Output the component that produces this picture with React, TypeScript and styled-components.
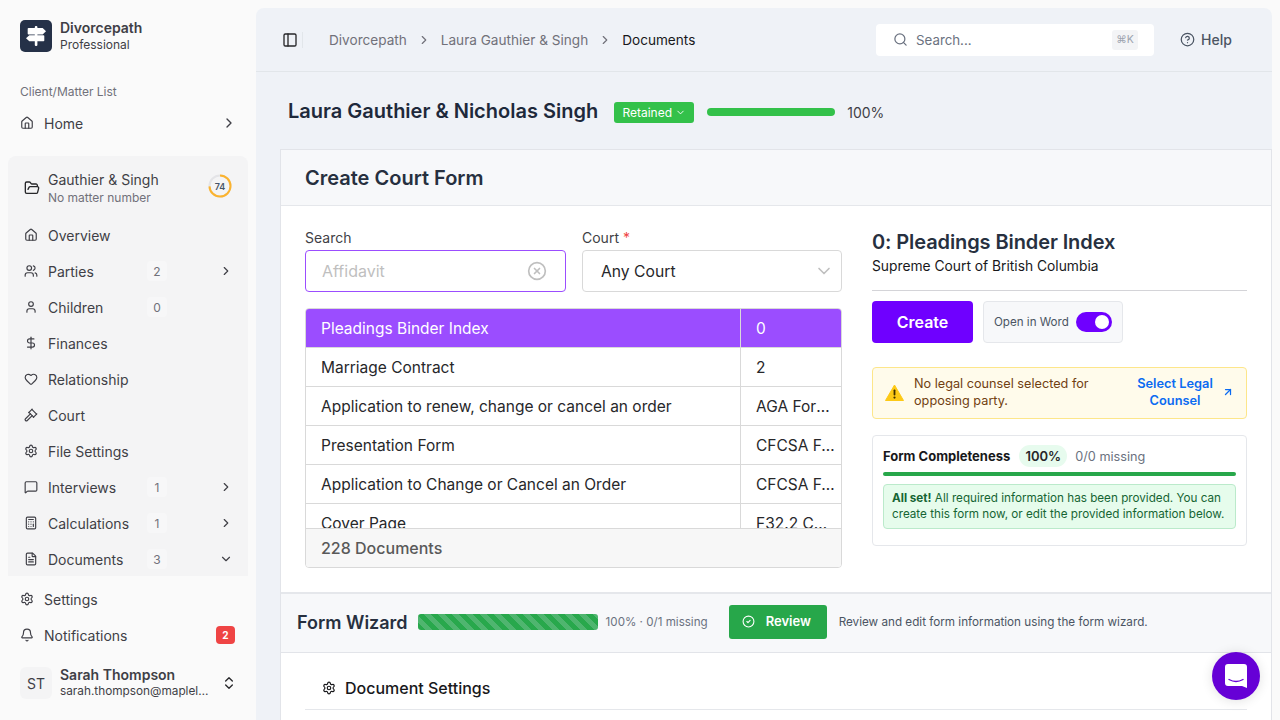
import React from "react";
import styled, { createGlobalStyle } from "styled-components";
import {
  ArrowUpRight,
  Bell,
  Calculator,
  ChevronDown,
  ChevronRight,
  ChevronsUpDown,
  CircleCheck,
  CircleHelp,
  CircleX,
  DollarSign,
  FileText,
  FolderOpen,
  Gavel,
  Heart,
  House,
  MessageSquare,
  PanelLeft,
  Search,
  Settings,
  User,
  Users,
} from "lucide-react";

const GlobalStyle = createGlobalStyle`
  html, body {
    margin: 0;
    height: 720px;
    overflow: hidden;
    background: #fafafa;
    font-family: Inter, "Liberation Sans", sans-serif;
    color: #27272a;
  }
  * { box-sizing: border-box; }
`;

const Shell = styled.div`
  display: flex;
  width: 1280px;
  height: 720px;
  overflow: hidden;
  position: relative;
`;

const Sidebar = styled.aside`
  width: 256px;
  flex: none;
  display: flex;
  flex-direction: column;
  padding: 20px 8px 0;
`;

const Brand = styled.div`
  display: flex;
  align-items: center;
  gap: 8px;
  padding: 0 12px;
  height: 32px;
`;

const LogoBox = styled.div`
  width: 32px;
  height: 32px;
  border-radius: 5px;
  background: #253148;
  display: flex;
  align-items: center;
  justify-content: center;
`;

const Stack = styled.div`
  display: flex;
  flex-direction: column;
  min-width: 0;
`;

const BrandName = styled.span`
  font-size: 14px;
  line-height: 17px;
  font-weight: 600;
  color: #3f3f46;
`;

const BrandSub = styled.span`
  font-size: 12px;
  line-height: 17px;
  color: #3f3f46;
`;

const SideLabel = styled.div`
  font-size: 12px;
  line-height: 16px;
  color: #71717a;
  padding: 0 12px;
  margin-top: 32px;
`;

const NavRow = styled.div`
  height: 36px;
  display: flex;
  align-items: center;
  gap: 10px;
  padding: 0 12px;
  font-size: 14px;
  color: #3f3f46;
  svg { flex: none; }
`;

const NavText = styled.span`
  flex: none;
`;

const Count = styled.span`
  position: absolute;
  left: 139px;
  top: 8px;
  width: 20px;
  height: 20px;
  border-radius: 4px;
  background: #f7f7f8;
  display: flex;
  align-items: center;
  justify-content: center;
  font-size: 12px;
  color: #71717a;
`;

const RowEnd = styled.span`
  margin-left: auto;
  margin-right: -1px;
  display: flex;
`;

const HomeRow = styled(NavRow)`
  margin-top: 5px;
`;

const MatterGroup = styled.div`
  margin-top: 15px;
  height: 420px;
  background: #f4f4f5;
  border-radius: 8px 8px 0 0;
  padding-top: 16px;
  margin-bottom: 5px;
`;

const MatterHead = styled.div`
  display: flex;
  align-items: center;
  gap: 8px;
  height: 32px;
  padding: 0 16px;
  margin-bottom: 13px;
`;

const MatterName = styled.span`
  font-size: 14px;
  line-height: 18px;
  color: #3f3f46;
`;

const MatterSub = styled.span`
  font-size: 12px;
  line-height: 17px;
  color: #71717a;
`;

const GroupRow = styled(NavRow)`
  position: relative;
  padding: 0 16px;
`;

const Ring = styled.div`
  margin-left: auto;
  margin-bottom: 4px;
  position: relative;
  width: 24px;
  height: 24px;
`;

const RingValue = styled.span`
  position: absolute;
  inset: 0;
  display: flex;
  align-items: center;
  justify-content: center;
  font-size: 9px;
  font-weight: 600;
  color: #475569;
`;

const AlertCount = styled.span`
  margin-left: auto;
  margin-right: 1px;
  width: 19px;
  height: 18px;
  border-radius: 4px;
  background: #ef4444;
  color: #fff;
  font-size: 10px;
  font-weight: 700;
  display: flex;
  align-items: center;
  justify-content: center;
`;

const UserRow = styled.div`
  display: flex;
  align-items: center;
  gap: 8px;
  padding: 0 12px;
  height: 32px;
  margin-top: 14px;
`;

const Avatar = styled.div`
  width: 32px;
  height: 32px;
  flex: none;
  border-radius: 6px;
  background: #f4f4f5;
  font-size: 14px;
  color: #3f3f46;
  display: flex;
  align-items: center;
  justify-content: center;
`;

const UserName = styled.span`
  font-size: 14px;
  line-height: 17px;
  font-weight: 600;
  color: #3f3f46;
`;

const UserMail = styled.span`
  font-size: 11.8px;
  line-height: 17px;
  color: #3f3f46;
  width: 153px;
  white-space: nowrap;
  overflow: hidden;
  text-overflow: ellipsis;
`;

const Main = styled.main`
  width: 1016px;
  margin-top: 8px;
  height: 712px;
  background: #eff2f7;
  border-radius: 8px 8px 0 0;
  display: flex;
  flex-direction: column;
  overflow: hidden;
`;

const TopBar = styled.header`
  height: 64px;
  flex: none;
  display: flex;
  align-items: center;
  padding: 0 0 0 26px;
  border-bottom: 1px solid #e2e6ea;
`;

const Separator = styled.span`
  width: 1px;
  height: 16px;
  background: #e2e6ea;
  margin: 0 26px 0 4px;
`;

const Crumb = styled.span<{ $current?: boolean }>`
  font-size: 13.6px;
  color: ${(p) => (p.$current ? "#18181b" : "#71717a")};
`;

const CrumbArrow = styled.span`
  display: flex;
  margin: 0 10px;
  color: #71717a;
`;

const SearchBox = styled.div`
  margin-left: auto;
  width: 278px;
  height: 32px;
  border-radius: 4px;
  background: #fff;
  display: flex;
  align-items: center;
  gap: 8px;
  padding: 0 16px 0 17px;
  font-size: 13.3px;
  color: #6b7280;
`;

const Kbd = styled.span`
  margin-left: auto;
  width: 26px;
  height: 20px;
  border-radius: 3px;
  background: #f3f4f6;
  color: #9ca3af;
  font-size: 10.5px;
  display: flex;
  align-items: center;
  justify-content: center;
`;

const HelpLink = styled.div`
  width: 118px;
  display: flex;
  align-items: center;
  gap: 6px;
  padding-left: 26px;
  font-size: 14px;
  font-weight: 500;
  color: #4b5563;
`;

const MatterBar = styled.div`
  height: 77px;
  flex: none;
  display: flex;
  align-items: center;
  padding: 0 0 0 32px;
`;

const MatterTitle = styled.h1`
  margin: 0;
  font-size: 20px;
  font-weight: 600;
  color: #1e293b;
  font-family: Inter, "Liberation Sans", sans-serif;
`;

const Badge = styled.span`
  margin: 3px 0 0 16px;
  height: 21px;
  width: 80px;
  border-radius: 3px;
  background: #33c14a;
  color: #fff;
  font-size: 12px;
  display: flex;
  align-items: center;
  justify-content: center;
  gap: 3px;
`;

const Meter = styled.div`
  margin: 3px 0 0 13px;
  width: 128px;
  height: 8px;
  border-radius: 4px;
  background: #33c14a;
`;

const MeterValue = styled.span`
  margin: 3px 0 0 12px;
  font-size: 14px;
  color: #3f3f46;
`;

const Card = styled.section`
  margin-left: 24px;
  width: 992px;
  flex: 1;
  background: #fff;
  border: 1px solid #e2e4e9;
  border-bottom: 0;
`;

const CardHead = styled.div`
  height: 56px;
  background: #f7f8fa;
  border-bottom: 1px solid #e5e7eb;
  display: flex;
  align-items: center;
  padding: 0 24px;
  font-size: 20px;
  font-weight: 600;
  color: #27303f;
`;

const FormGrid = styled.div`
  display: grid;
  grid-template-columns: 537px 375px;
  column-gap: 30px;
  padding: 24px 24px 0;
  height: 388px;
  border-bottom: 2px solid #e5e7eb;
`;

const Filters = styled.div`
  display: grid;
  grid-template-columns: 261px 260px;
  column-gap: 16px;
`;

const FieldLabel = styled.label`
  display: block;
  font-size: 14px;
  line-height: 16px;
  height: 20px;
  color: #3f3f46;
`;

const Required = styled.span`
  color: #ef4444;
`;

const InputShell = styled.div<{ $active?: boolean }>`
  height: 42px;
  border-radius: 4px;
  border: 1px solid ${(p) => (p.$active ? "#9b4dff" : "#d9d9d9")};
  background: #fff;
  display: flex;
  align-items: center;
  justify-content: space-between;
`;

const SearchValue = styled.span`
  padding-left: 16px;
  font-size: 16px;
  color: #bfbfbf;
`;

const CourtValue = styled.span`
  padding-left: 18px;
  font-size: 15.7px;
  color: #27272a;
`;

const ShellIcon = styled.span`
  display: flex;
  margin-right: 18px;
`;

const CourtIcon = styled(ShellIcon)`
  margin-right: 7px;
`;

const DocTable = styled.div`
  margin-top: 16px;
  height: 260px;
  border: 1px solid #d9d9d9;
  border-radius: 4px;
  overflow: hidden;
  display: flex;
  flex-direction: column;
`;

const DocRows = styled.div`
  height: 219px;
  overflow: hidden;
`;

const DocRow = styled.div<{ $selected?: boolean }>`
  display: grid;
  grid-template-columns: 435px 1fr;
  height: 39px;
  border-bottom: 1px solid #d9d9d9;
  background: ${(p) => (p.$selected ? "#9b4dff" : "#fff")};
  color: ${(p) => (p.$selected ? "#fff" : "#27272a")};
  font-size: 15.5px;
  line-height: 39px;
`;

const DocName = styled.div`
  padding-left: 15px;
  border-right: 1px solid #d9d9d9;
  white-space: nowrap;
  overflow: hidden;
`;

const DocCode = styled.div`
  padding: 0 5px 0 15px;
  white-space: nowrap;
  overflow: hidden;
  text-overflow: ellipsis;
`;

const DocFoot = styled.div`
  flex: 1;
  background: #f7f7f7;
  border-top: 1px solid #d9d9d9;
  display: flex;
  align-items: center;
  padding-left: 15px;
  font-size: 16px;
  font-weight: 500;
  color: #595959;
`;

const FormTitle = styled.h2`
  margin: 0;
  font-size: 20px;
  line-height: 24px;
  font-weight: 600;
  letter-spacing: -0.1px;
  color: #27303f;
`;

const FormCourt = styled.div`
  font-size: 13.8px;
  line-height: 24px;
  color: #18181b;
  padding-bottom: 12px;
  border-bottom: 1px solid #d4d4d8;
`;

const Actions = styled.div`
  display: flex;
  gap: 10px;
  margin-top: 10px;
`;

const CreateButton = styled.button`
  width: 101px;
  height: 42px;
  border: 0;
  border-radius: 4px;
  background: #6f00ff;
  color: #fff;
  font: 600 16px Inter, "Liberation Sans", sans-serif;
`;

const WordToggle = styled.div`
  width: 140px;
  height: 42px;
  border: 1px solid #e5e7eb;
  border-radius: 4px;
  background: #f7f8fa;
  display: flex;
  align-items: center;
  justify-content: space-between;
  padding: 0 10px;
  font-size: 11.6px;
  color: #4b5563;
`;

const Switch = styled.span`
  width: 36px;
  height: 20px;
  border-radius: 10px;
  background: #6f00ff;
  display: flex;
  align-items: center;
  justify-content: flex-end;
  padding-right: 3px;
`;

const Knob = styled.span`
  width: 14px;
  height: 14px;
  border-radius: 50%;
  background: #fff;
`;

const Notice = styled.div`
  margin-top: 24px;
  height: 52px;
  border: 1px solid #fde68a;
  border-radius: 4px;
  background: #fffbeb;
  display: flex;
  align-items: center;
  padding: 0 12px 2px;
  gap: 10px;
`;

const NoticeText = styled.span`
  width: 196px;
  font-size: 12.7px;
  line-height: 17px;
  color: #713f12;
`;

const NoticeLink = styled.span`
  margin-left: auto;
  margin-right: -7px;
  width: 88px;
  font-size: 12.8px;
  line-height: 17px;
  font-weight: 600;
  color: #0b6bf2;
  text-align: center;
`;

const CompleteCard = styled.div`
  margin-top: 16px;
  height: 111px;
  border: 1px solid #e5e7eb;
  border-radius: 4px;
  padding: 9px 10px;
`;

const CompleteHead = styled.div`
  display: flex;
  align-items: center;
  height: 22px;
  font-size: 13px;
  font-weight: 700;
  color: #18181b;
`;

const Pill = styled.span`
  margin-left: 9px;
  height: 22px;
  width: 48px;
  border-radius: 11px;
  background: #e7fbee;
  display: flex;
  align-items: center;
  justify-content: center;
  font-size: 13px;
  font-weight: 600;
  color: #27272a;
`;

const MissingText = styled.span`
  margin-left: 8px;
  font-size: 12.7px;
  font-weight: 400;
  color: #6b7280;
`;

const CompleteBar = styled.div`
  margin-top: 5px;
  height: 4px;
  border-radius: 2px;
  background: #27a74a;
`;

const AllSet = styled.div`
  margin-top: 8px;
  height: 45px;
  border: 1px solid #bbeacb;
  border-radius: 4px;
  background: #e6fcec;
  padding: 5px 8px;
  font-size: 11.7px;
  line-height: 16px;
  color: #166534;
  white-space: nowrap;
  b { font-weight: 700; }
`;

const WizardBar = styled.div`
  height: 59px;
  background: #f7f8fa;
  border-bottom: 1px solid #e2e4e9;
  display: flex;
  align-items: center;
  padding: 0 0 2px 16px;
`;

const WizardTitle = styled.span`
  font-size: 18px;
  font-weight: 600;
  color: #27303f;
`;

const Stripes = styled.div`
  margin-left: 10px;
  width: 180px;
  height: 16px;
  border-radius: 3px;
  background: repeating-linear-gradient(45deg, #28a84c 0 5px, #4fb56f 5px 10px);
`;

const WizardStat = styled.span`
  margin-left: 8px;
  font-size: 11.6px;
  color: #6b7280;
`;

const ReviewButton = styled.button`
  margin-left: 21px;
  width: 98px;
  height: 34px;
  border: 0;
  border-radius: 3px;
  background: #27a74a;
  color: #fff;
  display: flex;
  align-items: center;
  gap: 11px;
  padding: 0 0 2px 13px;
  font: 600 13px Inter, "Liberation Sans", sans-serif;
`;

const WizardHint = styled.span`
  margin-left: 12px;
  font-size: 11.7px;
  color: #4b5563;
`;

const SectionRow = styled.div`
  margin: 14px 24px 0;
  height: 43px;
  border-bottom: 1px solid #e5e7eb;
  display: flex;
  align-items: center;
  gap: 9px;
  padding: 0 0 0 17px;
  font-size: 16px;
  font-weight: 500;
  color: #18181b;
`;

const ChatBubble = styled.div`
  position: absolute;
  left: 1212px;
  top: 652px;
  width: 48px;
  height: 48px;
  border-radius: 50%;
  background: #6600d6;
  box-shadow: 0 1px 12px rgba(0, 0, 0, 0.12);
  display: flex;
  align-items: center;
  justify-content: center;
`;

const matterNav = [
  { icon: House, label: "Overview" },
  { icon: Users, label: "Parties", count: "2", end: "right" },
  { icon: User, label: "Children", count: "0" },
  { icon: DollarSign, label: "Finances" },
  { icon: Heart, label: "Relationship" },
  { icon: Gavel, label: "Court" },
  { icon: Settings, label: "File Settings" },
  { icon: MessageSquare, label: "Interviews", count: "1", end: "right" },
  { icon: Calculator, label: "Calculations", count: "1", end: "right" },
  { icon: FileText, label: "Documents", count: "3", end: "down" },
];

const documents = [
  ["Pleadings Binder Index", "0"],
  ["Marriage Contract", "2"],
  ["Application to renew, change or cancel an order", "AGA Form 1"],
  ["Presentation Form", "CFCSA Form 1"],
  ["Application to Change or Cancel an Order", "CFCSA Form 2"],
  ["Cover Page", "F32.2 Cover"],
];

function SignpostLogo() {
  return (
    <svg width="24" height="24" viewBox="0 0 24 24" fill="#fff">
      <rect x="10.8" y="2" width="2.6" height="20" rx="1" />
      <path d="M4.500 4h14.200l3.300 3.300-3.300 3.300H4.500a.8.8 0 0 1-.8-.8V4.800a.8.8 0 0 1 .8-.8z" />
      <path d="M19.500 11.300H5.300L2 14.300l3.300 3h14.200a.8.8 0 0 0 .8-.8v-4.400a.8.8 0 0 0-.8-.8z" />
    </svg>
  );
}

function WarningIcon() {
  return (
    <svg width="19" height="17" viewBox="0 0 19 17">
      <path d="M9.500 1 18.500 16.500H.5z" fill="#fdc916" stroke="#fdc916" strokeLinejoin="round" />
      <rect x="8.600" y="5.500" width="1.800" height="6" rx="0.8" fill="#3f3000" />
      <circle cx="9.500" cy="13.600" r="1.100" fill="#3f3000" />
    </svg>
  );
}

function ChatIcon() {
  return (
    <svg width="22" height="24" viewBox="0 0 22 24">
      <path d="M3 0h16a3 3 0 0 1 3 3v21l-5-2H3a3 3 0 0 1-3-3V3a3 3 0 0 1 3-3z" fill="#fff" />
      <path d="M4 15.500c4.500 2.600 9.500 2.600 14 0" fill="none" stroke="#6600d6" strokeWidth="1.400" strokeLinecap="round" />
    </svg>
  );
}

export default function App() {
  return (
    <Shell>
      <GlobalStyle />
      <Sidebar>
        <Brand>
          <LogoBox>
            <SignpostLogo />
          </LogoBox>
          <Stack>
            <BrandName>Divorcepath</BrandName>
            <BrandSub>Professional</BrandSub>
          </Stack>
        </Brand>
        <SideLabel>Client/Matter List</SideLabel>
        <HomeRow>
          <House size={14} />
          <NavText>Home</NavText>
          <RowEnd>
            <ChevronRight size={16} />
          </RowEnd>
        </HomeRow>
        <MatterGroup>
          <MatterHead>
            <FolderOpen size={16} />
            <Stack>
              <MatterName>Gauthier &amp; Singh</MatterName>
              <MatterSub>No matter number</MatterSub>
            </Stack>
            <Ring>
              <svg width="24" height="24" viewBox="0 0 24 24">
                <circle cx="12" cy="12" r="10.5" fill="none" stroke="#e4e4e7" strokeWidth="2" />
                <circle
                  cx="12"
                  cy="12"
                  r="10.5"
                  fill="none"
                  stroke="#fbb32f"
                  strokeWidth="2"
                  strokeDasharray="48.8 66"
                  transform="rotate(-90 12 12)"
                />
              </svg>
              <RingValue>74</RingValue>
            </Ring>
          </MatterHead>
          {matterNav.map((item) => (
            <GroupRow key={item.label}>
              <item.icon size={14} />
              <NavText>{item.label}</NavText>
              {item.count && <Count>{item.count}</Count>}
              {item.end === "right" && (
                <RowEnd>
                  <ChevronRight size={14} />
                </RowEnd>
              )}
              {item.end === "down" && (
                <RowEnd>
                  <ChevronDown size={14} />
                </RowEnd>
              )}
            </GroupRow>
          ))}
        </MatterGroup>
        <NavRow>
          <Settings size={14} />
          <NavText>Settings</NavText>
        </NavRow>
        <NavRow>
          <Bell size={14} />
          <NavText>Notifications</NavText>
          <AlertCount>2</AlertCount>
        </NavRow>
        <UserRow>
          <Avatar>ST</Avatar>
          <Stack>
            <UserName>Sarah Thompson</UserName>
            <UserMail>sarah.thompson@mapleleaflaw.ca</UserMail>
          </Stack>
          <RowEnd>
            <ChevronsUpDown size={16} />
          </RowEnd>
        </UserRow>
      </Sidebar>

      <Main>
        <TopBar>
          <PanelLeft size={16} color="#27272a" />
          <Separator />
          <Crumb>Divorcepath</Crumb>
          <CrumbArrow>
            <ChevronRight size={14} />
          </CrumbArrow>
          <Crumb>Laura Gauthier &amp; Singh</Crumb>
          <CrumbArrow>
            <ChevronRight size={14} />
          </CrumbArrow>
          <Crumb $current>Documents</Crumb>
          <SearchBox>
            <Search size={15} />
            <span>Search...</span>
            <Kbd>⌘K</Kbd>
          </SearchBox>
          <HelpLink>
            <CircleHelp size={15} />
            Help
          </HelpLink>
        </TopBar>
        <MatterBar>
          <MatterTitle>Laura Gauthier &amp; Nicholas Singh</MatterTitle>
          <Badge>
            Retained <ChevronDown size={11} />
          </Badge>
          <Meter />
          <MeterValue>100%</MeterValue>
        </MatterBar>
        <Card>
          <CardHead>Create Court Form</CardHead>
          <FormGrid>
            <div>
              <Filters>
                <div>
                  <FieldLabel>Search</FieldLabel>
                  <InputShell $active>
                    <SearchValue>Affidavit</SearchValue>
                    <ShellIcon>
                      <CircleX size={20} color="#bfbfbf" />
                    </ShellIcon>
                  </InputShell>
                </div>
                <div>
                  <FieldLabel>
                    Court <Required>*</Required>
                  </FieldLabel>
                  <InputShell>
                    <CourtValue>Any Court</CourtValue>
                    <CourtIcon>
                      <ChevronDown size={20} color="#bfbfbf" />
                    </CourtIcon>
                  </InputShell>
                </div>
              </Filters>
              <DocTable>
                <DocRows>
                  {documents.map(([name, code], i) => (
                    <DocRow key={name} $selected={i === 0}>
                      <DocName>{name}</DocName>
                      <DocCode>{code}</DocCode>
                    </DocRow>
                  ))}
                </DocRows>
                <DocFoot>228 Documents</DocFoot>
              </DocTable>
            </div>
            <div>
              <FormTitle>0: Pleadings Binder Index</FormTitle>
              <FormCourt>Supreme Court of British Columbia</FormCourt>
              <Actions>
                <CreateButton>Create</CreateButton>
                <WordToggle>
                  Open in Word
                  <Switch>
                    <Knob />
                  </Switch>
                </WordToggle>
              </Actions>
              <Notice>
                <WarningIcon />
                <NoticeText>No legal counsel selected for opposing party.</NoticeText>
                <NoticeLink>Select Legal Counsel</NoticeLink>
                <ArrowUpRight size={12} color="#0b6bf2" strokeWidth={2.5} />
              </Notice>
              <CompleteCard>
                <CompleteHead>
                  Form Completeness
                  <Pill>100%</Pill>
                  <MissingText>0/0 missing</MissingText>
                </CompleteHead>
                <CompleteBar />
                <AllSet>
                  <b>All set!</b> All required information has been provided. You can
                  <br />
                  create this form now, or edit the provided information below.
                </AllSet>
              </CompleteCard>
            </div>
          </FormGrid>
          <WizardBar>
            <WizardTitle>Form Wizard</WizardTitle>
            <Stripes />
            <WizardStat>100% · 0/1 missing</WizardStat>
            <ReviewButton>
              <CircleCheck size={13} />
              Review
            </ReviewButton>
            <WizardHint>Review and edit form information using the form wizard.</WizardHint>
          </WizardBar>
          <SectionRow>
            <Settings size={14} />
            Document Settings
          </SectionRow>
        </Card>
      </Main>
      <ChatBubble>
        <ChatIcon />
      </ChatBubble>
    </Shell>
  );
}
